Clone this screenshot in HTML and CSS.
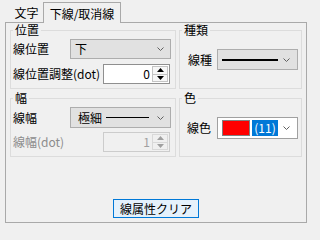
FILE: index.html
```html
<!DOCTYPE html>
<html lang="ja">
<head>
<meta charset="utf-8">
<link rel="stylesheet" href="styles.css">
</head>
<body>
<div class="tabs">
  <div class="tab">文字</div>
  <div class="tab active">下線/取消線</div>
</div>
<div class="panel">
  <div class="groups">
    <div class="group g-pos">
      <div class="legend">位置</div>
      <div class="row r1">
        <span class="lbl">線位置</span>
        <div class="select sel-pos"><span class="val">下</span><svg class="chev" width="7" height="4" viewBox="0 0 7 4"><polyline points="0.5,0.5 3.5,3.5 6.5,0.5" fill="none" stroke="#606060" stroke-width="1"/></svg></div>
      </div>
      <div class="row r2">
        <span class="lbl">線位置調整(dot)</span>
        <div class="spin"><span class="num">0</span><div class="spinbtns"><span class="sb"><svg width="7" height="4" viewBox="0 0 7 4"><polygon points="0,4 3.5,0 7,4" fill="#000"/></svg></span><span class="sb"><svg width="7" height="4" viewBox="0 0 7 4"><polygon points="0,0 3.5,4 7,0" fill="#000"/></svg></span></div></div>
      </div>
    </div>
    <div class="group g-type">
      <div class="legend">種類</div>
      <div class="row r1">
        <span class="lbl">線種</span>
        <div class="select sel-type"><span class="val"><span class="thick"></span></span><svg class="chev" width="7" height="4" viewBox="0 0 7 4"><polyline points="0.5,0.5 3.5,3.5 6.5,0.5" fill="none" stroke="#606060" stroke-width="1"/></svg></div>
      </div>
    </div>
    <div class="group g-width">
      <div class="legend">幅</div>
      <div class="row r1">
        <span class="lbl">線幅</span>
        <div class="select sel-width"><span class="val">極細<span class="thin"></span></span><svg class="chev" width="7" height="4" viewBox="0 0 7 4"><polyline points="0.5,0.5 3.5,3.5 6.5,0.5" fill="none" stroke="#606060" stroke-width="1"/></svg></div>
      </div>
      <div class="row r2">
        <span class="lbl disabled">線幅(dot)</span>
        <div class="spin dis"><span class="num">1</span><div class="spinbtns"><span class="sb"><svg width="7" height="4" viewBox="0 0 7 4"><polygon points="0,4 3.5,0 7,4" fill="#a0a0a0"/></svg></span><span class="sb"><svg width="7" height="4" viewBox="0 0 7 4"><polygon points="0,0 3.5,4 7,0" fill="#a0a0a0"/></svg></span></div></div>
      </div>
    </div>
    <div class="group g-color">
      <div class="legend">色</div>
      <div class="row r1">
        <span class="lbl">線色</span>
        <div class="combo"><span class="swatch"></span><span class="idx">(11)</span><svg class="chev" width="7" height="4" viewBox="0 0 7 4"><polyline points="0.5,0.5 3.5,3.5 6.5,0.5" fill="none" stroke="#606060" stroke-width="1"/></svg></div>
      </div>
    </div>
  </div>
  <button class="clear">線属性クリア</button>
</div>
</body>
</html>
```

FILE: styles.css
```css
body {
  margin: 0;
  width: 314px;
  height: 229px;
  overflow: hidden;
  background: #f0f0f0;
  color: #000;
  font-family: "Noto Sans CJK JP", "Noto Sans", sans-serif;
  font-size: 12px;
  line-height: 12px;
}

.tabs {
  display: flex;
  align-items: flex-end;
  height: 22px;
  padding-left: 10px;
  box-sizing: border-box;
}

.tab {
  width: 33px;
  height: 18px;
  display: flex;
  align-items: center;
  justify-content: center;
}

.tab.active {
  position: relative;
  z-index: 1;
  width: 78px;
  height: 21px;
  box-sizing: border-box;
  border: 1px solid #a9a9a9;
  border-bottom: none;
  margin-bottom: -1px;
  padding-top: 1px;
  background: #f0f0f0;
}

.panel {
  margin-left: 5px;
  width: 302px;
  height: 201px;
  box-sizing: border-box;
  border: 1px solid #a9a9a9;
  padding: 7px 0 4px;
  display: flex;
  flex-direction: column;
  align-items: center;
}

.groups {
  align-self: stretch;
  margin-left: 4px;
  display: grid;
  grid-template-columns: 166px 123px;
  grid-template-rows: 59px 59px;
  column-gap: 3px;
  row-gap: 9px;
}

.group {
  border: 1px solid #dcdcdc;
  box-sizing: border-box;
  display: flex;
  flex-direction: column;
}

.legend {
  align-self: flex-start;
  height: 12px;
  margin: -7px 0 0 2px;
  padding: 0 2px;
  background: #f0f0f0;
}

.row {
  display: flex;
  align-items: center;
}

.lbl {
  flex: 1;
  white-space: nowrap;
}

.lbl.disabled {
  color: #8c8c8c;
}

/* 位置 */
.g-pos .row { padding-left: 2px; }
.g-pos .r1 { margin-top: 3px; height: 20px; }
.g-pos .r2 { margin-top: 5px; height: 20px; }
.g-pos .select { width: 101px; height: 20px; margin-right: 4px; }
.g-pos .spin { margin-right: 5px; }

/* 種類 */
.g-type .row { padding-left: 8px; margin-top: 13px; height: 21px; }
.g-type .select { width: 81px; height: 21px; margin-right: 3px; }

/* 幅 */
.g-width .row { padding-left: 2px; }
.g-width .r1 { margin-top: 3px; height: 21px; }
.g-width .r2 { margin-top: 4px; height: 20px; }
.g-width .select { width: 101px; height: 21px; margin-right: 4px; }
.g-width .spin { margin-right: 5px; }

/* 色 */
.g-color .row { padding-left: 7px; margin-top: 13px; height: 22px; }

.select {
  display: flex;
  align-items: center;
  box-sizing: border-box;
  border: 1px solid #adadad;
  background: #e1e1e1;
  padding-left: 4px;
}

.sel-width { padding-left: 7px; }

.val {
  flex: 1;
  display: flex;
  align-items: center;
  white-space: nowrap;
}

.chev {
  flex: none;
  margin-right: 6px;
}

.sel-type .chev,
.combo .chev {
  margin-right: 7px;
}

.thick {
  display: block;
  width: 56px;
  height: 2px;
  background: #000;
}

.thin {
  display: block;
  width: 43px;
  height: 1px;
  margin-left: 4px;
  background: #000;
}

.spin {
  display: flex;
  width: 67px;
  height: 20px;
  box-sizing: border-box;
  border: 1px solid #8f8f8f;
  background: #fff;
}

.spin .num {
  flex: 1;
  text-align: right;
  line-height: 18px;
  padding-right: 2px;
}

.spinbtns {
  width: 16px;
  display: flex;
  flex-direction: column;
  padding: 1px 1px 1px 0;
  gap: 0;
}

.sb {
  flex: 1;
  display: flex;
  align-items: center;
  justify-content: center;
  border: 1px solid #c4c4c4;
  background: #f7f7f7;
}

.sb + .sb {
  border-top: none;
}

.spin.dis {
  border-color: #cccccc;
  background: #f0f0f0;
  color: #a0a0a0;
}

.spin.dis .sb {
  border-color: #d9d9d9;
  background: #f0f0f0;
}

.combo {
  display: flex;
  align-items: center;
  width: 81px;
  height: 22px;
  margin-right: 3px;
  box-sizing: border-box;
  border: 1px solid #a0a0a0;
  background: #fff;
  padding-left: 4px;
}

.swatch {
  width: 28px;
  height: 16px;
  box-sizing: border-box;
  border: 1px solid #808080;
  background: #ff0000;
}

.idx {
  width: 26px;
  height: 16px;
  margin-left: 2px;
  margin-right: auto;
  background: #0078d7;
  color: #fff;
  line-height: 16px;
  text-align: center;
}

.clear {
  margin-top: auto;
  width: 86px;
  height: 19px;
  padding: 0;
  border: 1px solid #0078d7;
  background: #e5f1fb;
  color: #000;
  font: inherit;
  line-height: 17px;
}
```
